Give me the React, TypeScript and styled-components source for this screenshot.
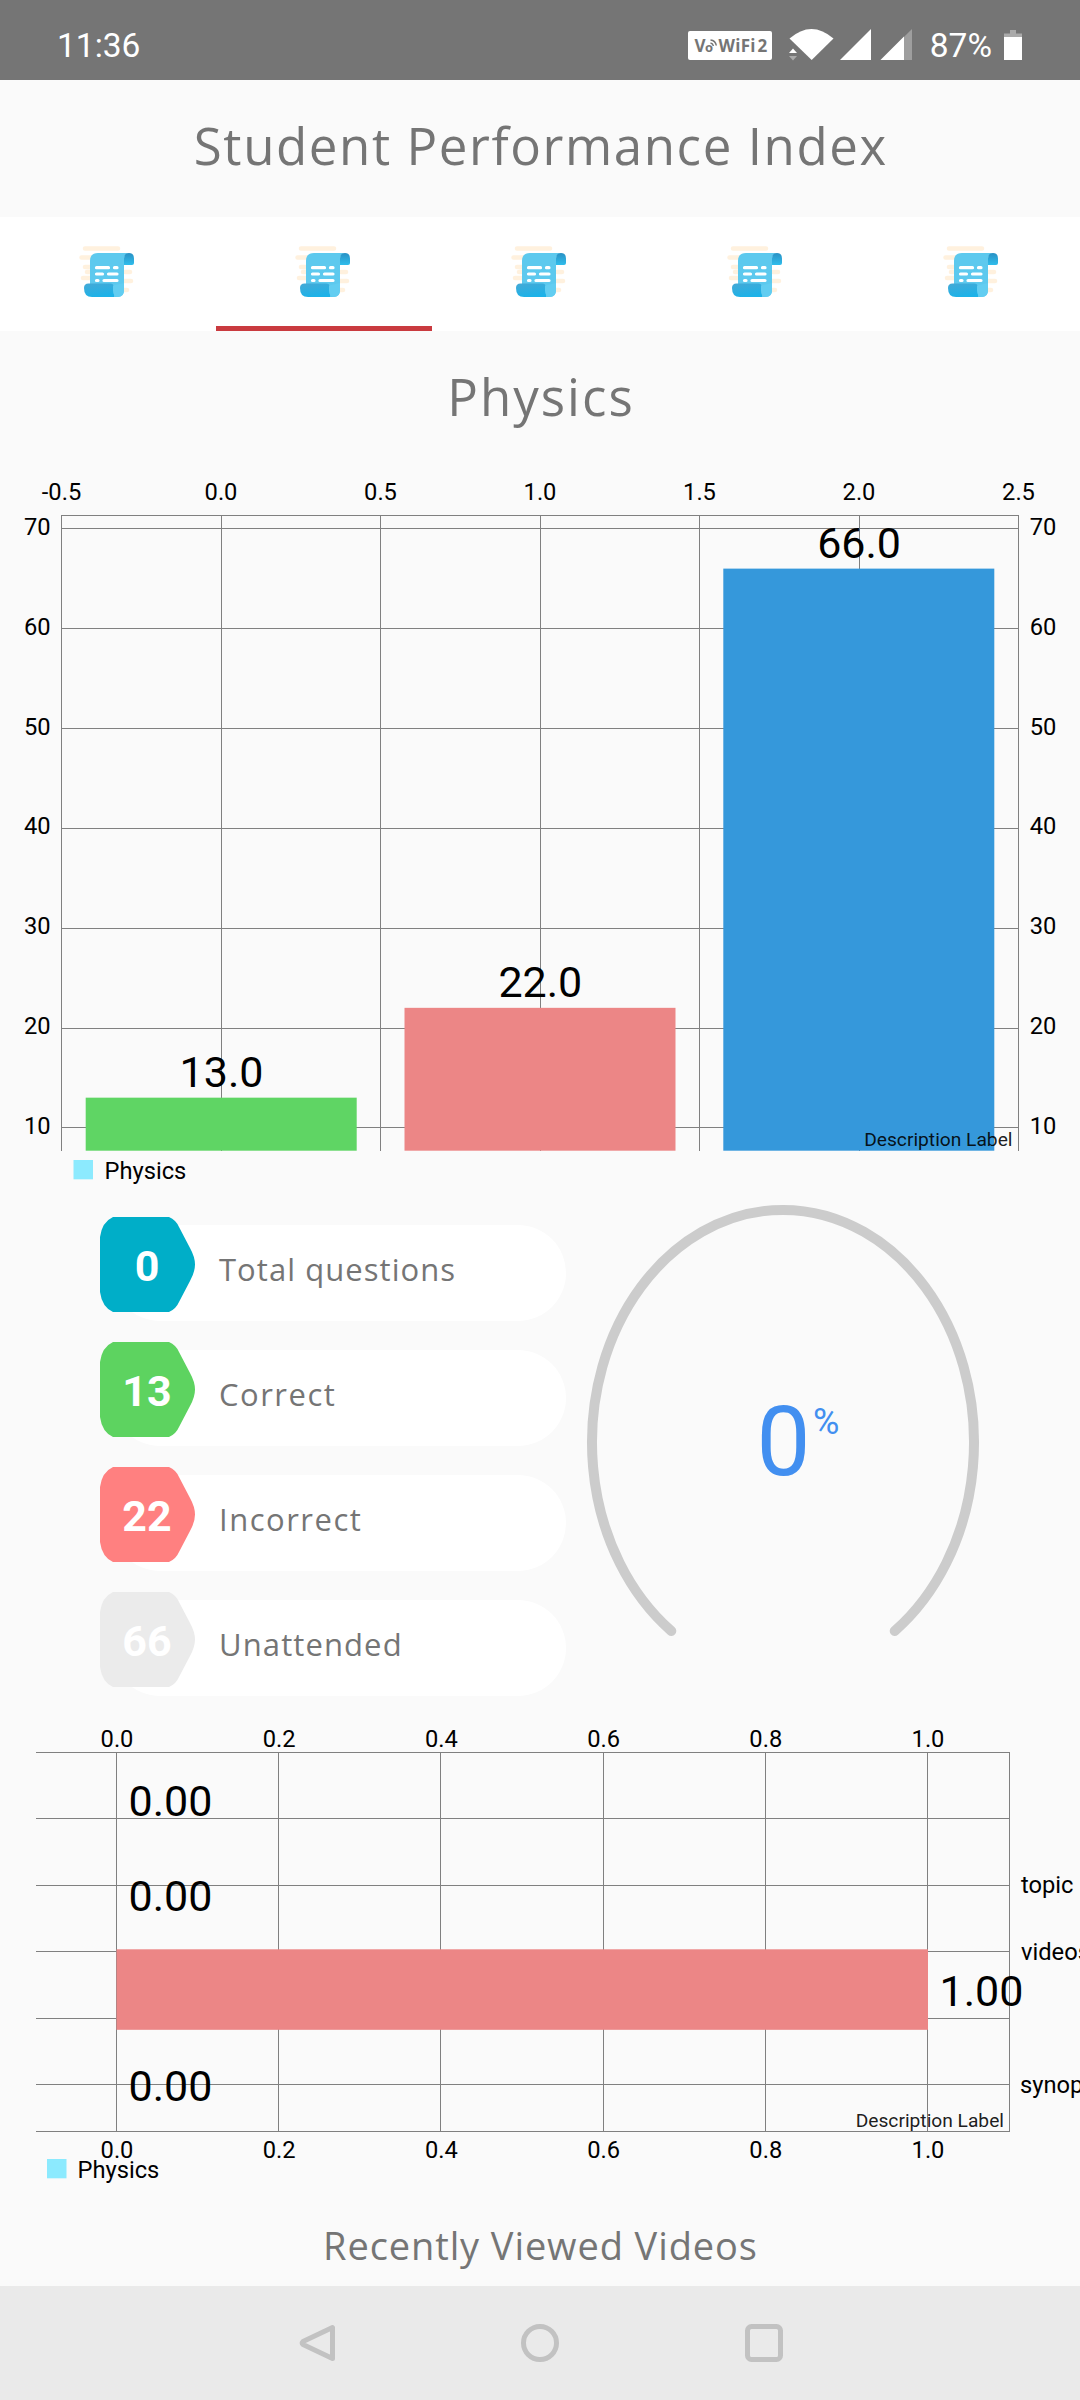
import React from "react";
import styled, { createGlobalStyle } from "styled-components";

const GlobalStyle = createGlobalStyle`
  html, body { margin: 0; padding: 0; background: #fafafa; }
  body { width: 1080px; overflow: hidden; font-family: Roboto, sans-serif; }
  *, *::before, *::after { box-sizing: border-box; }
`;

const Screen = styled.main`
  display: flex;
  flex-direction: column;
  width: 1080px;
  height: 2400px;
  overflow: hidden;
  background: #fafafa;
`;

const StatusBar = styled.header`
  display: flex;
  flex: none;
  align-items: center;
  justify-content: space-between;
  height: 80px;
  padding: 12px 58px 0 57px;
  background: #757575;
  color: #fff;
`;

const StatusText = styled.span`
  font-size: 33.5px;
  line-height: 40px;
`;

const StatusGroup = styled.div`
  display: flex;
  align-items: center;
`;

const StatusIcons = styled.svg`
  display: block;
  margin-right: 17px;
`;

const BatteryIcon = styled.svg`
  display: block;
  margin-left: 12px;
`;

const Heading = styled.h1<{ $height: number; $size: number; $spacing: number; $lift: number }>`
  display: flex;
  flex: none;
  align-items: center;
  justify-content: center;
  height: ${(p) => p.$height}px;
  margin: 0;
  padding-top: ${(p) => Math.max(-p.$lift, 0)}px;
  padding-bottom: ${(p) => Math.max(p.$lift, 0)}px;
  color: #757575;
  font-family: "Open Sans", sans-serif;
  font-weight: 400;
  font-size: ${(p) => p.$size}px;
  letter-spacing: ${(p) => p.$spacing}px;
  text-indent: ${(p) => p.$spacing}px;
  line-height: 1.2;
  white-space: nowrap;
`;

const Tabs = styled.nav`
  display: grid;
  flex: none;
  grid-template-columns: repeat(5, 1fr);
  height: 114px;
  background: #fff;
`;

const Tab = styled.div<{ $active: boolean }>`
  display: flex;
  align-items: center;
  justify-content: center;
  padding: 1px 2px 0 0;
  border-bottom: 5px solid ${(p) => (p.$active ? "#c93a3f" : "transparent")};
`;

const ChartSvg = styled.svg`
  display: block;
  flex: none;
`;

const AxisText = styled.text`
  font: 400 23.7px Roboto, sans-serif;
  fill: #000;
`;

const ValueText = styled.text`
  font: 400 43px Roboto, sans-serif;
  fill: #000;
`;

const DescriptionText = styled.text`
  font: 400 19.2px Roboto, sans-serif;
  fill: rgba(0, 0, 0, 0.9);
  text-anchor: end;
`;

const Summary = styled.section`
  display: flex;
  flex: none;
  height: 520px;
  padding: 27px 0 0 100px;
`;

const StatList = styled.div`
  display: flex;
  flex: none;
  flex-direction: column;
  gap: 20px;
  width: 466px;
`;

const StatRow = styled.div`
  display: grid;
  grid-template-columns: 95px 1fr;
  height: 105px;
`;

const Badge = styled.div`
  display: grid;
  grid-area: 1 / 1;
  width: 95px;
  height: 95px;
  z-index: 1;

  & > * { grid-area: 1 / 1; }
`;

const BadgeNumber = styled.span`
  place-self: center;
  padding: 3px 1px 0 0;
  color: #fff;
  font-size: 43px;
  font-weight: 700;
  line-height: 50px;
`;

const Pill = styled.div<{ $spacing: number }>`
  display: flex;
  grid-area: 1 / 1 / 2 / 3;
  align-items: center;
  height: 96px;
  margin: 8px 0 0 12px;
  padding: 0 0 8px 107px;
  border-radius: 48px;
  background: #fff;
  color: #757575;
  font-family: "Open Sans", sans-serif;
  font-size: 31px;
  letter-spacing: ${(p) => p.$spacing}px;
`;

const GaugeSvg = styled.svg`
  display: block;
  flex: none;
  margin: -27px 0 0 -6px;
`;

const GaugeNumber = styled.text<{ $size: number }>`
  font: 400 ${(p) => p.$size}px Roboto, sans-serif;
  fill: #428ff0;
`;

const NavBar = styled.footer`
  display: flex;
  flex: none;
  align-items: center;
  justify-content: space-between;
  height: 114px;
  padding: 0 296px 0 298px;
  background: #eaeaea;
`;

const GRID = "#808080";

function StatusGlyphs() {
  return (
    <StatusIcons width="226" height="34" viewBox="688 31 226 34">
      <rect x="689" y="33" width="84" height="29" rx="2" fill="#fff" />
      <g fill="#757575" fontFamily="Open Sans, sans-serif" fontWeight="700">
        <text x="695.5" y="54" fontSize="17">V</text>
        <text x="706" y="54" fontSize="13">o</text>
        <text x="719.5" y="54" fontSize="17" textLength="37">WiFi</text>
        <text x="758.5" y="54" fontSize="17">2</text>
      </g>
      <g fill="none" stroke="#757575" strokeWidth="1.5">
        <path d="M711.500 45q2.500 .5 2.900 3" />
        <path d="M711.500 42q5 .5 5.800 5.500" />
      </g>
      <path d="M790.500 40.500Q812.500 21.500 834.500 40.500L812.700 62Z" fill="#fff" />
      <path d="M790 55l4-4.500 4 4.500z" fill="#fff" />
      <path d="M790 58h8l-4 4.500z" fill="#aaa" />
      <path d="M841 62L872 31V62Z" fill="#fff" />
      <path d="M881.500 62L913 31V62Z" fill="#9e9e9e" />
      <path d="M881.500 62L905 38.500V62Z" fill="#fff" />
    </StatusIcons>
  );
}

function ScrollIcon({ id }: { id: number }) {
  return (
    <svg width="56" height="54" viewBox="0 0 56 54">
      <defs>
        <linearGradient id={`roll${id}`} x1="0" y1="0" x2="0.300" y2="1">
          <stop offset="0" stopColor="#45a9d6" />
          <stop offset="1" stopColor="#1db2e8" />
        </linearGradient>
        <linearGradient id={`curl${id}`} x1="0" y1="0" x2="0" y2="1">
          <stop offset="0" stopColor="#2a91c4" />
          <stop offset="1" stopColor="#2fbdec" />
        </linearGradient>
      </defs>
      <g stroke="#fff1de" strokeWidth="4.500" strokeLinecap="round">
        <path d="M6 3.500h33M2.500 12.500h12M6 22h8M4 33h10M8 27h6M46 27h5M44 36h8M44 45h4" />
      </g>
      <path d="M11 16q0-8 8-8h31q-5 1-5 6v31q0 7-7 7H26L11 42z" fill="#5dc9ee" />
      <path d="M45 20v-6.500q0-5.500 5-5.500t5 5.500V18q0 2-2 2z" fill={`url(#curl${id})`} />
      <path d="M5 43q0-4.500 4.500-4.500H31q4 0 4 4v9.500H13q-8 0-8-9z" fill={`url(#roll${id})`} />
      <path d="M34 40.500v5q0 6.500 5 6.500 6 0 6-7V38z" fill="#62cdf1" />
      <g stroke="#fff" strokeWidth="3.200" strokeLinecap="round">
        <path d="M17.500 22.700h12M35.500 22.700h2.500M17.500 29h6M29.500 29h8.500M17.500 35.500h1.500M25 35.500h13" />
      </g>
    </svg>
  );
}

const RESULTS = [
  { value: 13, color: "#5fd564" },
  { value: 22, color: "#ec8686" },
  { value: 66, color: "#3598db" },
];

function ScoreChart() {
  const left = 61.5;
  const right = 1018.5;
  const bottom = 1150.7;
  const step = (right - left) / 6;
  const y = (v: number) => 528.99 + (70 - v) * 9.982;
  return (
    <ChartSvg width="1080" height="720" viewBox="0 470 1080 720">
      <g stroke={GRID} strokeWidth="1" shapeRendering="crispEdges">
        <path d={`M${left} 515.500H${right}`} />
        {[0, 1, 2, 3, 4, 5, 6].map((i) => (
          <path key={i} d={`M${left + i * step} 515V${bottom}`} />
        ))}
        {[70, 60, 50, 40, 30, 20, 10].map((v) => (
          <path key={v} d={`M${left} ${Math.floor(y(v)) + 0.5}H${right}`} />
        ))}
      </g>
      {[-0.5, 0, 0.5, 1, 1.5, 2, 2.5].map((v, i) => (
        <AxisText key={v} x={left + i * step} y="500" textAnchor="middle">{v.toFixed(1)}</AxisText>
      ))}
      {[70, 60, 50, 40, 30, 20, 10].map((v) => (
        <g key={v}>
          <AxisText x="50.700" y={y(v) + 6} textAnchor="end">{v}</AxisText>
          <AxisText x="1029.700" y={y(v) + 6}>{v}</AxisText>
        </g>
      ))}
      {RESULTS.map((r, i) => {
        const x = 85.7 + i * 318.8;
        const top = y(r.value) - 0.3;
        return (
          <g key={r.value}>
            <rect x={x} y={top} width="271" height={bottom - top} fill={r.color} />
            <ValueText x={x + 135.8} y={top - 10.5} textAnchor="middle">{r.value.toFixed(1)}</ValueText>
          </g>
        );
      })}
      <DescriptionText x="1012.500" y="1145.500">Description Label</DescriptionText>
      <rect x="73.500" y="1160" width="19.500" height="19.300" fill="#8ceafe" />
      <AxisText x="104.500" y="1179">Physics</AxisText>
    </ChartSvg>
  );
}

function ActivityChart() {
  const ticks = [0, 0.2, 0.4, 0.6, 0.8, 1];
  const x = (v: number) => 116.5 + v * 811;
  return (
    <ChartSvg width="1080" height="490" viewBox="0 1710 1080 490">
      <g stroke={GRID} strokeWidth="1" shapeRendering="crispEdges">
        {[1752.5, 1818.5, 1885.5, 1951.5, 2018.5, 2084.5, 2131.5].map((y) => (
          <path key={y} d={`M36 ${y}H1009.500`} />
        ))}
        {ticks.map((t) => (
          <path key={t} d={`M${x(t)} 1752V2131`} />
        ))}
        <path d="M1009.500 1752V2131.500" />
      </g>
      {ticks.map((t) => (
        <g key={t}>
          <AxisText x={x(t) + 0.5} y="1747" textAnchor="middle">{t.toFixed(1)}</AxisText>
          <AxisText x={x(t) + 0.5} y="2158" textAnchor="middle">{t.toFixed(1)}</AxisText>
        </g>
      ))}
      <rect x="116.500" y="1949.300" width="811.500" height="80.500" fill="#ec8686" />
      <ValueText x="128.500" y="1815.500">0.00</ValueText>
      <ValueText x="128.500" y="1910.500">0.00</ValueText>
      <ValueText x="939.500" y="2005.500">1.00</ValueText>
      <ValueText x="128.500" y="2100.500">0.00</ValueText>
      <AxisText x="1021" y="1893">topic</AxisText>
      <AxisText x="1021" y="1959.500">videos</AxisText>
      <AxisText x="1020" y="2093">synopsis</AxisText>
      <DescriptionText x="1004" y="2127">Description Label</DescriptionText>
      <rect x="47" y="2159" width="19.500" height="19.300" fill="#8ceafe" />
      <AxisText x="77.500" y="2178">Physics</AxisText>
    </ChartSvg>
  );
}

const STATS = [
  { label: "Total questions", value: 0, color: "#00aec8", spacing: 1.05 },
  { label: "Correct", value: 13, color: "#5dd360", spacing: 1.5 },
  { label: "Incorrect", value: 22, color: "#ff8080", spacing: 1.5 },
  { label: "Unattended", value: 66, color: "#ebebeb", spacing: 1.1 },
];

export default function App() {
  return (
    <>
      <GlobalStyle />
      <Screen>
        <StatusBar>
          <StatusText>11:36</StatusText>
          <StatusGroup>
            <StatusGlyphs />
            <StatusText>87%</StatusText>
            <BatteryIcon width="18" height="32" viewBox="0 0 18 32">
              <path d="M6 0h6V3.500h6v4H0V3.500h6z" fill="#aaa" />
              <path d="M0 7h18V30H0z" fill="#fff" />
            </BatteryIcon>
          </StatusGroup>
        </StatusBar>
        <Heading $height={137} $size={51} $spacing={1.6} $lift={6}>Student Performance Index</Heading>
        <Tabs>
          {[0, 1, 2, 3, 4].map((i) => (
            <Tab key={i} $active={i === 1}>
              <ScrollIcon id={i} />
            </Tab>
          ))}
        </Tabs>
        <Heading as="h2" $height={139} $size={51} $spacing={2} $lift={8}>Physics</Heading>
        <ScoreChart />
        <Summary>
          <StatList>
            {STATS.map((s) => (
              <StatRow key={s.label}>
                <Badge>
                  <svg width="95" height="95" viewBox="0 0 95 95">
                    <path d="M0 20Q2 5 13 0H69Q76 3 79 10L90 31Q95 40 95 47.500T90 64L79 85Q76 92 69 95H13Q2 90 0 75Z" fill={s.color} />
                  </svg>
                  <BadgeNumber>{s.value}</BadgeNumber>
                </Badge>
                <Pill $spacing={s.spacing}>{s.label}</Pill>
              </StatRow>
            ))}
          </StatList>
          <GaugeSvg width="520" height="520" viewBox="560 1190 520 520">
            <path
              d="M671.300 1631A191 232.500 0 1 1 894.700 1631"
              fill="none"
              stroke="#ccc"
              strokeWidth="10"
              strokeLinecap="round"
            />
            <GaugeNumber $size={96} x="783.500" y="1475" textAnchor="middle">0</GaugeNumber>
            <GaugeNumber $size={36} x="813" y="1434">%</GaugeNumber>
          </GaugeSvg>
        </Summary>
        <ActivityChart />
        <Heading as="h2" $height={86} $size={38} $spacing={0.9} $lift={-6}>Recently Viewed Videos</Heading>
        <NavBar>
          <svg width="40" height="40" viewBox="0 0 40 40">
            <path d="M34.500 4.500v31L5 21.500q-1.500-1.500 0-3z" fill="none" stroke="#c2c2c2" strokeWidth="5" strokeLinejoin="round" />
          </svg>
          <svg width="40" height="40" viewBox="0 0 40 40">
            <circle cx="19" cy="20" r="16.500" fill="none" stroke="#c2c2c2" strokeWidth="5" />
          </svg>
          <svg width="40" height="40" viewBox="0 0 40 40">
            <rect x="3.500" y="3.500" width="33" height="33" rx="4" fill="none" stroke="#c2c2c2" strokeWidth="5" />
          </svg>
        </NavBar>
      </Screen>
    </>
  );
}
